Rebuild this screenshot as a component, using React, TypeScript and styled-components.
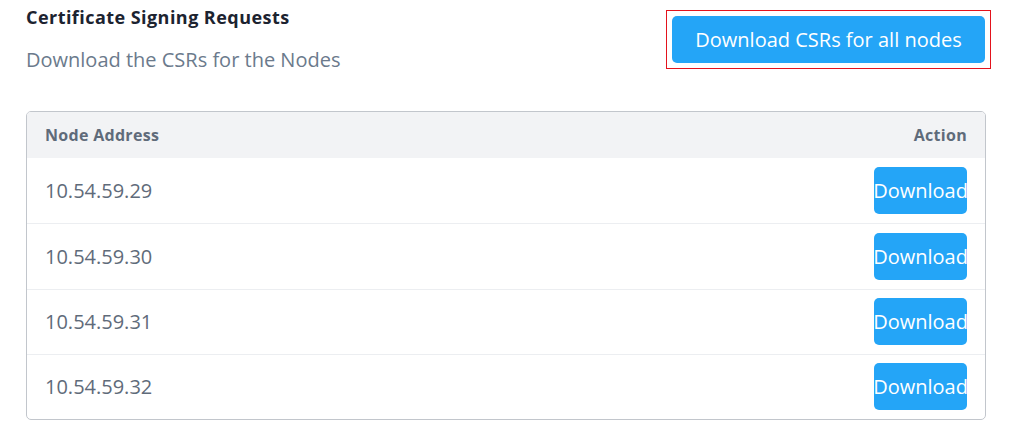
import React from "react";
import styled, { createGlobalStyle } from "styled-components";

const Global = createGlobalStyle`
  html, body { margin: 0; padding: 0; background: #ffffff; }
  body { font-family: "Open Sans", "Noto Sans", sans-serif; }
  * { box-sizing: border-box; }
`;

const Page = styled.div`
  padding: 6px 47px 0 26px;
  width: 1033px;
`;

const Header = styled.div`
  display: flex;
  justify-content: space-between;
  align-items: flex-start;
`;

const Titles = styled.div`
  display: flex;
  flex-direction: column;
`;

const Title = styled.h1`
  margin: 0;
  font-size: 18px;
  line-height: 22px;
  letter-spacing: 0.45px;
  font-weight: 700;
  color: #1c2330;
`;

const Subtitle = styled.p`
  margin: 20px 0 0;
  font-size: 20px;
  line-height: 24px;
  color: #6b7a8c;
`;

const Outline = styled.div`
  margin-top: 4px;
  margin-right: -5px;
  border: 1px solid #e3131d;
  padding: 5px;
`;

const PrimaryButton = styled.button<{ $compact?: boolean }>`
  border: none;
  background: #24a5f7;
  color: #ffffff;
  font-family: inherit;
  border-radius: 5px;
  cursor: pointer;
  height: 47px;
  padding: ${(p) => (p.$compact ? "0" : "0 22px")};
  width: ${(p) => (p.$compact ? "93px" : "313px")};
  font-size: 20px;
  white-space: nowrap;
  display: flex;
  align-items: center;
  justify-content: center;
`;

const Table = styled.div`
  margin-top: 39px;
  border: 1px solid #c2c6cc;
  border-radius: 5px;
  overflow: hidden;
`;

const HeadRow = styled.div`
  display: flex;
  justify-content: space-between;
  align-items: center;
  height: 46px;
  padding: 0 18px;
  background: #f2f3f5;
  font-size: 16px;
  letter-spacing: 0.3px;
  font-weight: 700;
  color: #5f6b7a;
`;

const Row = styled.div`
  display: flex;
  justify-content: space-between;
  align-items: center;
  height: 65.25px;
  padding: 0 18px;
  border-top: 1px solid #eceef1;
  &:first-of-type { border-top: none; }
`;

const Address = styled.span`
  font-size: 20px;
  color: #5f6b7a;
`;

const nodes = ["10.54.59.29", "10.54.59.30", "10.54.59.31", "10.54.59.32"];

export default function App() {
  return (
    <>
      <Global />
      <Page>
        <Header>
          <Titles>
            <Title>Certificate Signing Requests</Title>
            <Subtitle>Download the CSRs for the Nodes</Subtitle>
          </Titles>
          <Outline>
            <PrimaryButton>Download CSRs for all nodes</PrimaryButton>
          </Outline>
        </Header>
        <Table>
          <HeadRow>
            <span>Node Address</span>
            <span>Action</span>
          </HeadRow>
          <div>
            {nodes.map((n) => (
              <Row key={n}>
                <Address>{n}</Address>
                <PrimaryButton $compact>Download</PrimaryButton>
              </Row>
            ))}
          </div>
        </Table>
      </Page>
    </>
  );
}
